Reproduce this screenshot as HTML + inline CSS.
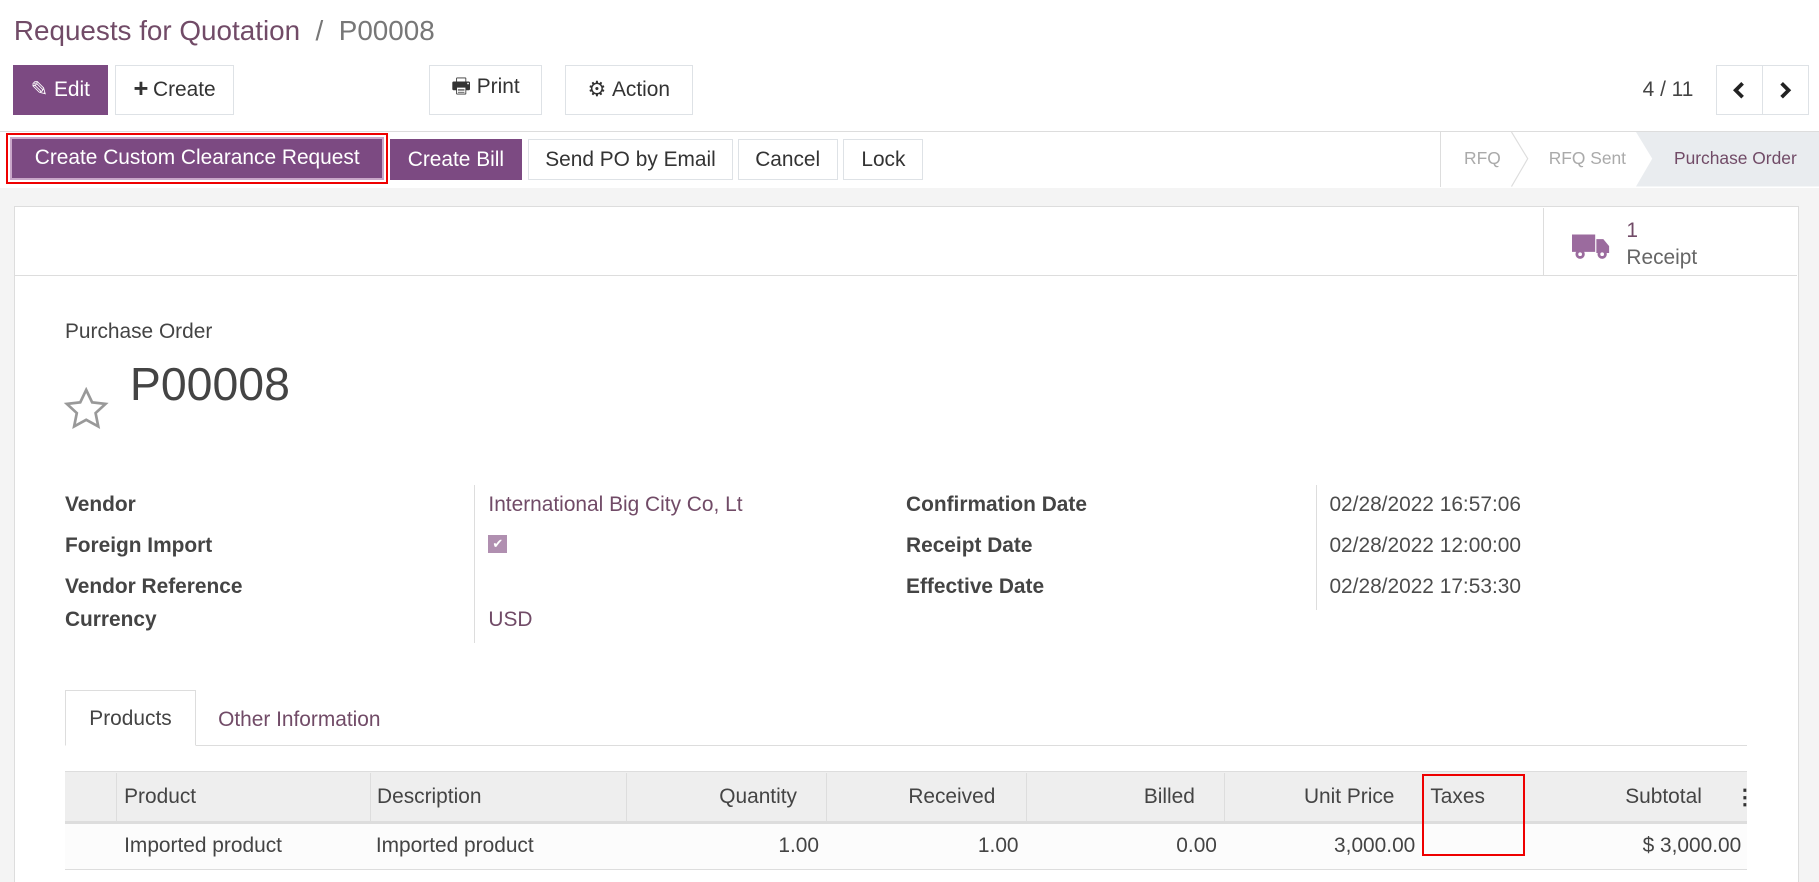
<!DOCTYPE html>
<html><head><meta charset="utf-8"><style>
html,body{margin:0;padding:0;overflow:hidden;background:#fff}
#w{zoom:1.16008;position:relative;width:1568px;height:760px;font-family:"Liberation Sans",sans-serif;color:#4c4c4c;overflow:hidden}
.a{position:absolute;white-space:nowrap}
.btn{position:absolute;box-sizing:border-box;border:1px solid #dee2e6;background:#fff;color:#333;font-size:18px;display:flex;align-items:center;justify-content:center}
.p{background:#7c4a82;color:#fff;border-color:#7c4a82}
.lbl{font-size:18px;color:#444;font-weight:bold}
.val{font-size:18px;color:#4c4c4c}
.pur{color:#714b67}
</style></head><body><div id="w">
<div class="a" style="left:12px;top:13px;font-size:24px;color:#714b67">Requests for Quotation <span style="color:#777">&nbsp;/&nbsp; P00008</span></div>
<div class="btn p" style="left:11px;top:56px;width:82px;height:43px">✎ Edit</div>
<div class="btn" style="left:99px;top:56px;width:103px;height:43px"><b style="font-size:22px;margin-right:4px">+</b>Create</div>
<div class="btn" style="left:370px;top:56px;width:97px;height:43px">🖶&nbsp;Print</div>
<div class="btn" style="left:487px;top:56px;width:110px;height:43px">⚙&nbsp;Action</div>
<div class="a" style="left:1416px;top:67px;font-size:18px;color:#444">4 / 11</div>
<div class="btn" style="left:1479px;top:56px;width:41px;height:43px"><svg width="14" height="16" viewBox="0 0 14 16"><path d="M10 2 L4 8 L10 14" fill="none" stroke="#222" stroke-width="3.2"/></svg></div>
<div class="btn" style="left:1519px;top:56px;width:40px;height:43px"><svg width="14" height="16" viewBox="0 0 14 16"><path d="M4 2 L10 8 L4 14" fill="none" stroke="#222" stroke-width="3.2"/></svg></div>
<div class="a" style="left:0;top:113px;width:1568px;height:48px;border-top:1px solid #ddd;border-bottom:1px solid #ddd;background:#fff"></div>
<div class="a" style="left:0;top:162px;width:1568px;height:600px;background:#f4f4f4"></div>
<div class="btn p" style="left:9px;top:118px;width:322px;height:37px;outline:2px solid #e00;outline-offset:2px;border:2px solid #c9a7c9">Create Custom Clearance Request</div>
<div class="btn p" style="left:336px;top:120px;width:114px;height:35px">Create Bill</div>
<div class="btn" style="left:455px;top:120px;width:177px;height:35px">Send PO by Email</div>
<div class="btn" style="left:636px;top:120px;width:86px;height:35px">Cancel</div>
<div class="btn" style="left:727px;top:120px;width:69px;height:35px">Lock</div>
<div class="a" style="left:1241px;top:114px;height:47px;border-left:1px solid #ddd"></div>
<div class="a" style="left:1262px;top:128px;font-size:15px;color:#aaa">RFQ</div>
<svg class="a" style="left:1300px;top:114px" width="20" height="47"><path d="M3 0 L17 23 L3 47" fill="none" stroke="#ddd"/></svg>
<div class="a" style="left:1335px;top:128px;font-size:15px;color:#aaa">RFQ Sent</div>
<svg class="a" style="left:1410px;top:114px" width="158" height="47"><path d="M0 0 H158 V47 H0 L14 23 Z" fill="#e9ecef"/></svg>
<div class="a" style="left:1443px;top:128px;font-size:15px;color:#714b67">Purchase Order</div>
<div class="a" style="left:12px;top:178px;width:1537px;height:590px;background:#fff;border:1px solid #ddd"></div>
<div class="a" style="left:12px;top:237px;width:1537px;border-top:1px solid #ddd"></div>
<div class="a" style="left:1330px;top:179px;height:58px;border-left:1px solid #ddd"></div>
<svg class="a" style="left:1355px;top:199px" width="33" height="26" viewBox="0 0 33 26"><path d="M0 3 h20 v15 h-20z M21 7 h6 l5 6 v6 h-11z" fill="#9b6b9e"/><circle cx="7" cy="20" r="4" fill="#9b6b9e"/><circle cx="26" cy="20" r="4" fill="#9b6b9e"/><circle cx="7" cy="20" r="1.6" fill="#fff"/><circle cx="26" cy="20" r="1.6" fill="#fff"/></svg>
<div class="a" style="left:1402px;top:189px;font-size:18px;color:#714b67">1</div>
<div class="a" style="left:1402px;top:212px;font-size:18px;color:#666">Receipt</div>
<div class="a" style="left:56px;top:276px;font-size:18px;color:#444">Purchase Order</div>
<svg class="a" style="left:54px;top:334px" width="40" height="38" viewBox="0 0 24 23"><path d="M12 1.5l3.1 6.5 7 .8-5.2 4.8 1.4 7L12 17.1 5.7 20.6l1.4-7L1.9 8.8l7-.8z" fill="none" stroke="#999" stroke-width="1.4"/></svg>
<div class="a" style="left:112px;top:308px;font-size:40px;color:#444">P00008</div>
<div class="a lbl" style="left:56px;top:425px">Vendor</div>
<div class="a lbl" style="left:56px;top:460px">Foreign Import</div>
<div class="a lbl" style="left:56px;top:496px">Vendor Reference</div>
<div class="a lbl" style="left:56px;top:524px">Currency</div>
<div class="a" style="left:409px;top:418px;height:136px;border-left:1px solid #ddd"></div>
<div class="a val pur" style="left:421px;top:425px">International Big City Co, Lt</div>
<div class="a" style="left:421px;top:461px;width:16px;height:16px;background:#b08fb0;color:#fff;font-size:11px;text-align:center;line-height:16px">✔</div>
<div class="a val pur" style="left:421px;top:524px">USD</div>
<div class="a lbl" style="left:781px;top:425px">Confirmation Date</div>
<div class="a lbl" style="left:781px;top:460px">Receipt Date</div>
<div class="a lbl" style="left:781px;top:496px">Effective Date</div>
<div class="a" style="left:1134px;top:418px;height:108px;border-left:1px solid #ddd"></div>
<div class="a val" style="left:1146px;top:425px">02/28/2022 16:57:06</div>
<div class="a val" style="left:1146px;top:460px">02/28/2022 12:00:00</div>
<div class="a val" style="left:1146px;top:496px">02/28/2022 17:53:30</div>
<div class="a" style="left:56px;top:642px;width:1450px;border-top:1px solid #ddd"></div>
<div class="a" style="left:56px;top:595px;width:113px;height:48px;border:1px solid #ddd;border-bottom:1px solid #fff;background:#fff;box-sizing:border-box;font-size:18px;color:#444;text-align:center;line-height:48px">Products</div>
<div class="a" style="left:188px;top:610px;font-size:18px;color:#714b67">Other Information</div>
<div class="a" style="left:56px;top:665px;width:1450px;height:42px;background:#eee;border-top:1px solid #ddd;border-bottom:3px solid #ddd"></div>
<div class="a" style="left:56px;top:710px;width:1450px;height:39px;background:#fcfcfc;border-bottom:1px solid #ddd"></div>
<div class="a" style="left:100px;top:666px;height:42px;border-left:1px solid #ddd"></div>
<div class="a" style="left:319px;top:666px;height:42px;border-left:1px solid #ddd"></div>
<div class="a" style="left:540px;top:666px;height:42px;border-left:1px solid #ddd"></div>
<div class="a" style="left:712px;top:666px;height:42px;border-left:1px solid #ddd"></div>
<div class="a" style="left:884px;top:666px;height:42px;border-left:1px solid #ddd"></div>
<div class="a" style="left:1055px;top:666px;height:42px;border-left:1px solid #ddd"></div>
<div class="a val" style="left:107px;top:677px;color:#444">Product</div>
<div class="a val" style="left:325px;top:677px;color:#444">Description</div>
<div class="a val" style="right:881px;top:677px;color:#444">Quantity</div>
<div class="a val" style="right:710px;top:677px;color:#444">Received</div>
<div class="a val" style="right:538px;top:677px;color:#444">Billed</div>
<div class="a val" style="right:366px;top:677px;color:#444">Unit Price</div>
<div class="a val" style="left:1233px;top:677px;color:#444">Taxes</div>
<div class="a val" style="right:101px;top:677px;color:#444">Subtotal</div>
<div class="a" style="left:1495px;top:677px;font-size:18px;font-weight:bold;color:#333">⋮</div>
<div class="a val" style="left:107px;top:719px;color:#444">Imported product</div>
<div class="a val" style="left:324px;top:719px;color:#444">Imported product</div>
<div class="a val" style="right:862px;top:719px;color:#444">1.00</div>
<div class="a val" style="right:690px;top:719px;color:#444">1.00</div>
<div class="a val" style="right:519px;top:719px;color:#444">0.00</div>
<div class="a val" style="right:348px;top:719px;color:#444">3,000.00</div>
<div class="a val" style="right:67px;top:719px;color:#444">$ 3,000.00</div>
<div class="a" style="left:1226px;top:667px;width:89px;height:71px;border:2px solid #e00;box-sizing:border-box"></div>
</div></body></html>
